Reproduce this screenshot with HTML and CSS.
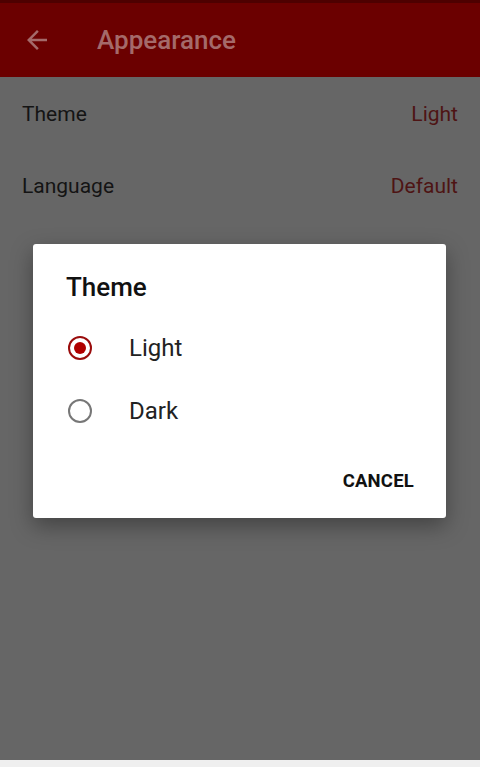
FILE: index.html
```html
<!DOCTYPE html>
<html lang="en">
<head>
  <meta charset="UTF-8" />
  <title>Appearance</title>
  <link rel="stylesheet" href="styles.css">
</head>
<body>
  <div class="screen">
    <header class="appbar">
      <svg class="back" width="30" height="30" viewBox="0 0 24 24">
        <path d="M20 11H7.83l5.59-5.59L12 4l-8 8 8 8 1.41-1.41L7.83 13H20v-2z" fill="currentColor"/>
      </svg>
      <span class="title">Appearance</span>
    </header>
    <main class="settings">
      <div class="row"><span class="label">Theme</span><span class="value">Light</span></div>
      <div class="row"><span class="label">Language</span><span class="value">Default</span></div>
    </main>
    <div class="navstrip"></div>

    <div class="dialog">
      <h2>Theme</h2>
      <div class="option">
        <span class="radio checked"></span>
        <span>Light</span>
      </div>
      <div class="option">
        <span class="radio"></span>
        <span>Dark</span>
      </div>
      <div class="actions">
        <button>CANCEL</button>
      </div>
    </div>
  </div>
</body>
</html>
```

FILE: styles.css
```css
body {
  margin: 0;
  font-family: Roboto, 'Noto Sans', sans-serif;
  background-color: #666;
}
.screen {
  position: relative;
  height: 767px;
  display: flex;
  flex-direction: column;
  overflow: hidden;
}
.appbar {
  height: 77px;
  flex-shrink: 0;
  display: flex;
  align-items: center;
  background-color: #6b0000;
  border-top: 3px solid #4e0000;
  box-sizing: border-box;
  color: #a46a6a;
}
.back {
  margin-left: 22px;
  width: 30px;
  height: 30px;
}
.title {
  margin-left: 45px;
  font-size: 26px;
  font-weight: 500;
}
.settings {
  flex: 1;
  padding-top: 1px;
}
.row {
  display: flex;
  justify-content: space-between;
  align-items: center;
  height: 72px;
  padding: 0 22px;
  font-size: 21px;
}
.label {
  color: #141414;
}
.value {
  color: #4e1414;
}
.navstrip {
  height: 7px;
  background-color: #efefef;
}
.dialog {
  position: absolute;
  left: 33px;
  top: 244px;
  width: 413px;
  height: 274px;
  box-sizing: border-box;
  background: #fff;
  border-radius: 3px;
  box-shadow: 0 8px 22px rgba(0,0,0,0.35);
  padding: 26px 32px 0 33px;
}
.dialog h2 {
  margin: 0 0 12px;
  font-size: 26px;
  font-weight: 500;
  color: #111;
  line-height: 34px;
}
.option {
  display: flex;
  align-items: center;
  height: 63px;
  font-size: 24px;
  color: #222;
}
.radio {
  width: 20px;
  height: 20px;
  border: 2.5px solid #777;
  border-radius: 50%;
  margin: 0 37px 0 2px;
  box-sizing: content-box;
  position: relative;
}
.radio.checked {
  border-color: #9a0c0c;
}
.radio.checked::after {
  content: '';
  position: absolute;
  left: 4px;
  top: 4px;
  width: 12px;
  height: 12px;
  border-radius: 50%;
  background: #b00000;
}
.actions {
  display: flex;
  justify-content: flex-end;
  margin-top: 28px;
}
.actions button {
  font-family: inherit;
  font-size: 18.5px;
  font-weight: 700;
  color: #111;
  background: none;
  border: none;
  padding: 0;
  letter-spacing: 0.2px;
}
```
